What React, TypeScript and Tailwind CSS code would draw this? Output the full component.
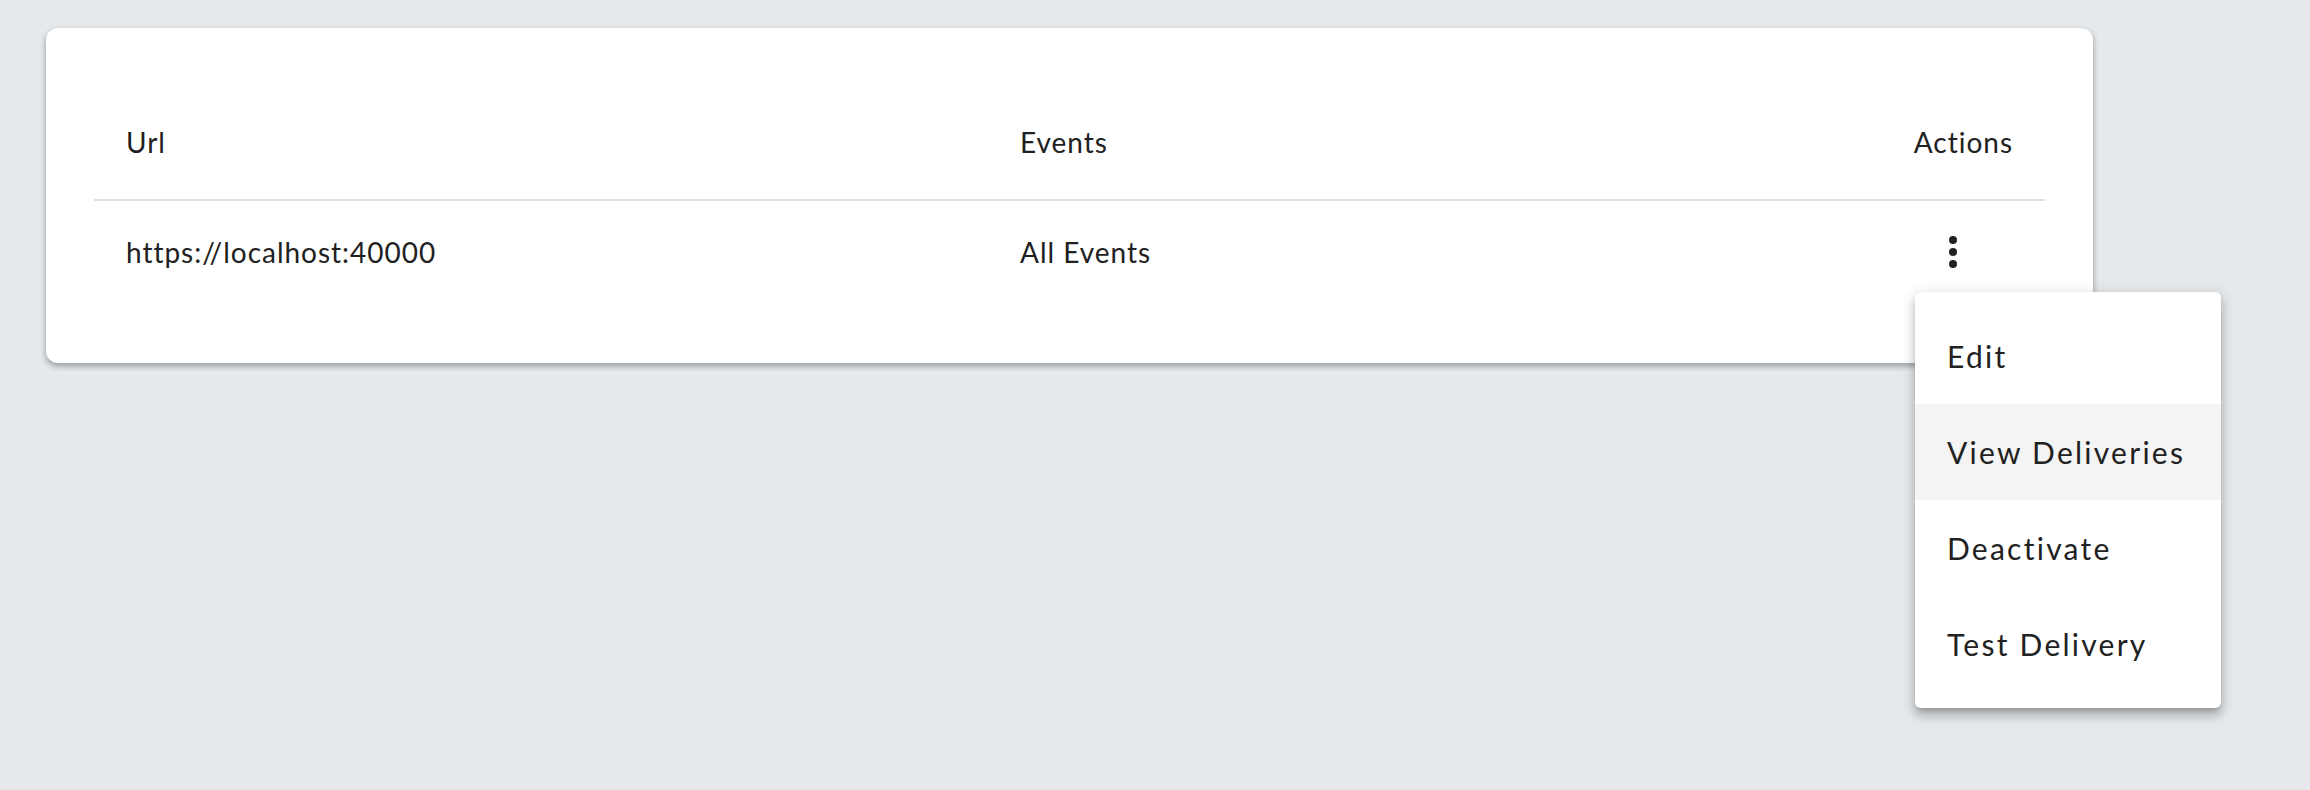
const menuItems = ["Edit", "View Deliveries", "Deactivate", "Test Delivery"];

function KebabIcon() {
  return (
    <svg width="48" height="48" viewBox="0 0 24 24" fill="#212121">
      <circle cx="12" cy="6" r="2" />
      <circle cx="12" cy="12" r="2" />
      <circle cx="12" cy="18" r="2" />
    </svg>
  );
}

export default function App() {
  return (
    <div
      className="relative w-[2310px] h-[790px] bg-[#e5e9ec] text-[#212121] overflow-hidden"
      style={{ fontFamily: "Lato, 'Open Sans', sans-serif" }}
    >
      <div className="ml-[46px] pt-[28px]">
        <div className="w-[2047px] bg-white rounded-xl px-12 pt-[93px] pb-[60px] shadow-[0_3px_6px_rgba(0,0,0,0.16),0_3px_6px_rgba(0,0,0,0.2)]">
          <div className="flex text-[28px] leading-[42px] tracking-[0.035em] pb-[36px] border-b-2 border-[#e0e0e0]">
            <div className="w-[894px] pl-8">Url</div>
            <div className="flex-1 pl-8">Events</div>
            <div className="w-[200px] pr-8 text-right">Actions</div>
          </div>
          <div className="flex items-center h-[102px] text-[28px] leading-[42px] tracking-[0.035em]">
            <div className="w-[894px] pl-8">https://localhost:40000</div>
            <div className="flex-1 pl-8">All Events</div>
            <div className="w-[200px] flex justify-end pr-[68px]">
              <KebabIcon />
            </div>
          </div>
        </div>
      </div>

      <div className="absolute left-[1915px] top-[292px] w-[306px] bg-white rounded-md py-4 shadow-[0_5px_5px_-3px_rgba(0,0,0,0.2),0_8px_10px_1px_rgba(0,0,0,0.14),0_3px_14px_2px_rgba(0,0,0,0.12)]">
        {menuItems.map((item, i) => (
          <div
            key={item}
            className={`h-[96px] flex items-center px-8 text-[30px] tracking-[0.075em] ${
              i === 1 ? "bg-[#f4f4f4]" : ""
            }`}
          >
            {item}
          </div>
        ))}
      </div>
    </div>
  );
}
